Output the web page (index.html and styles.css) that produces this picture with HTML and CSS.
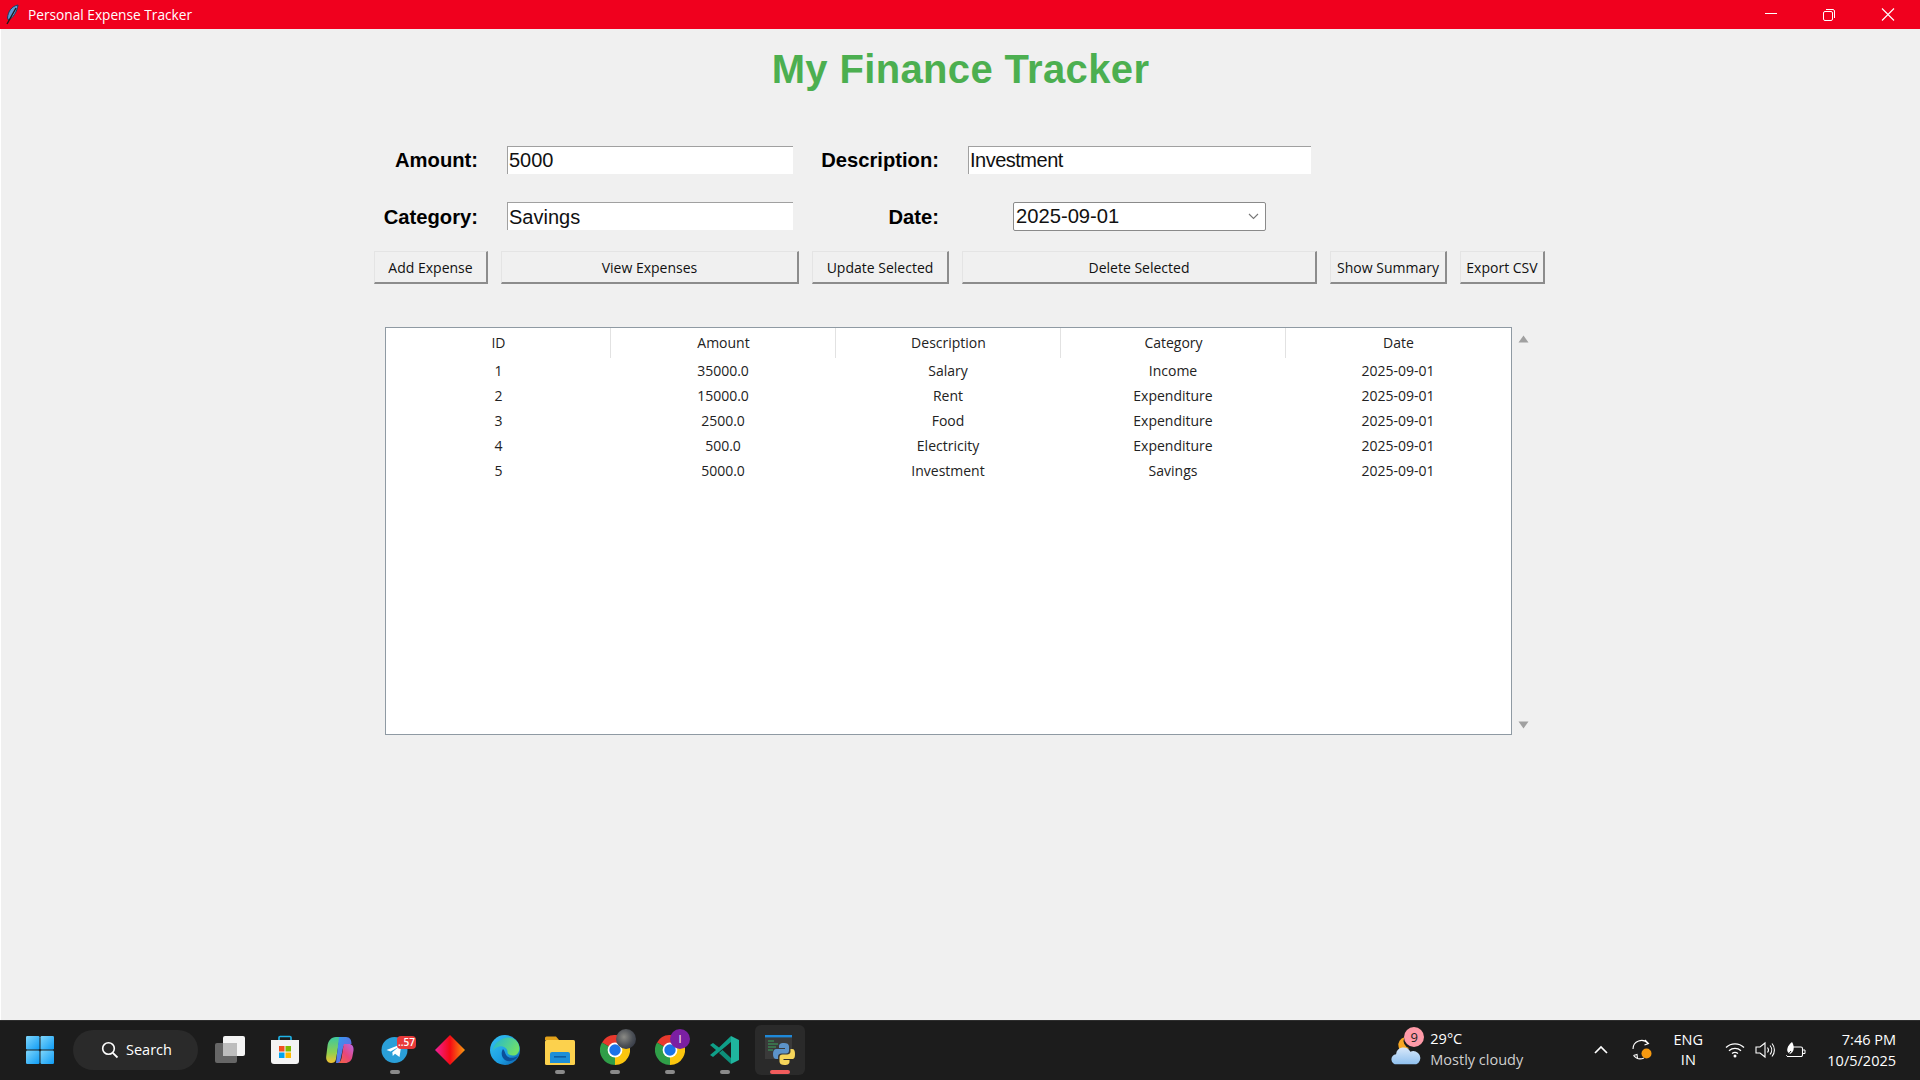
FILE: index.html
```html
<!DOCTYPE html>
<html lang="en">
<head>
<meta charset="utf-8">
<title>Personal Expense Tracker</title>
<link rel="stylesheet" href="styles.css">
</head>
<body>
<svg class="defs" width="0" height="0" aria-hidden="true">
  <symbol id="chrome" viewBox="0 0 30 30">
    <path d="M15 15L2 7.5A15 15 0 0 1 28 7.5Z" fill="#e8392d"/>
    <path d="M15 15L28 7.5A15 15 0 0 1 15 30Z" fill="#fbc60e"/>
    <path d="M15 15L15 30A15 15 0 0 1 2 7.5Z" fill="#2f9e48"/>
    <circle cx="15" cy="15" r="7.4" fill="#fff"/>
    <circle cx="15" cy="15" r="5.7" fill="#1a73e8"/>
  </symbol>
</svg>

<header class="titlebar">
  <svg class="feather" width="16" height="22" viewBox="0 0 16 22">
    <path d="M14 1C8 2 4 7 3.5 14L4.5 16C9 14 13 8 14 1Z" fill="#5b9bd5" stroke="#1d3c5e" stroke-width="1"/>
    <path d="M12 4L3 20" stroke="#1a1a1a" stroke-width="1.4"/>
  </svg>
  <span class="window-title">Personal Expense Tracker</span>
  <div class="window-controls">
    <svg class="ctl" width="58" height="29" viewBox="0 0 58 29"><path d="M22 13.5H34" stroke="#fff" stroke-width="1"/></svg>
    <svg class="ctl" width="58" height="29" viewBox="0 0 58 29"><rect x="22.5" y="11.5" width="9" height="9" rx="1.5" fill="none" stroke="#fff"/><path d="M25 9.5H32A1.8 1.8 0 0 1 33.5 11V18" fill="none" stroke="#fff"/></svg>
    <svg class="ctl" width="58" height="29" viewBox="0 0 58 29"><path d="M23 8.5L35 20.5M35 8.5L23 20.5" stroke="#fff" stroke-width="1.1"/></svg>
  </div>
</header>

<main class="app">
  <h1 class="app-title">My Finance Tracker</h1>

  <section class="form">
    <label class="field-label row1 col1">Amount:</label>
    <div class="entry row1 col2">5000</div>
    <label class="field-label row1 col3">Description:</label>
    <div class="entry row1 col4 tight">Investment</div>

    <label class="field-label row2 col1">Category:</label>
    <div class="entry row2 col2">Savings</div>
    <label class="field-label row2 col3">Date:</label>
    <div class="combo row2 col4">
      <span>2025-09-01</span>
      <svg width="11" height="7" viewBox="0 0 11 7"><path d="M1 1L5.5 5.5L10 1" fill="none" stroke="#777" stroke-width="1.1"/></svg>
    </div>

    <button class="btn row3 col1">Add Expense</button>
    <button class="btn row3 col2">View Expenses</button>
    <button class="btn row3 col3">Update Selected</button>
    <button class="btn row3 col4">Delete Selected</button>
    <button class="btn row3 col5">Show Summary</button>
    <button class="btn row3 col6">Export CSV</button>
  </section>

  <section class="table-wrap">
    <div class="tree">
      <div class="tree-head">
        <div>ID</div><div>Amount</div><div>Description</div><div>Category</div><div>Date</div>
      </div>
      <div class="tree-row"><div>1</div><div>35000.0</div><div>Salary</div><div>Income</div><div>2025-09-01</div></div>
      <div class="tree-row"><div>2</div><div>15000.0</div><div>Rent</div><div>Expenditure</div><div>2025-09-01</div></div>
      <div class="tree-row"><div>3</div><div>2500.0</div><div>Food</div><div>Expenditure</div><div>2025-09-01</div></div>
      <div class="tree-row"><div>4</div><div>500.0</div><div>Electricity</div><div>Expenditure</div><div>2025-09-01</div></div>
      <div class="tree-row"><div>5</div><div>5000.0</div><div>Investment</div><div>Savings</div><div>2025-09-01</div></div>
    </div>
    <div class="scrollbar">
      <svg width="11" height="8" viewBox="0 0 11 8"><path d="M5.5 0.5L10.5 7.5H0.5Z" fill="#a0a0a0"/></svg>
      <svg width="11" height="8" viewBox="0 0 11 8"><path d="M0.5 0.5H10.5L5.5 7.5Z" fill="#a0a0a0"/></svg>
    </div>
  </section>
</main>

<footer class="taskbar">
  <div class="start">
    <svg width="30" height="30" viewBox="0 0 30 30">
      <defs>
        <linearGradient id="win" x1="0" y1="0" x2="1" y2="1"><stop offset="0" stop-color="#7fd6fb"/><stop offset="1" stop-color="#0f9cf5"/></linearGradient>
      </defs>
      <rect x="1" y="1" width="13.5" height="13.5" rx="1.2" fill="url(#win)"/>
      <rect x="15.5" y="1" width="13.5" height="13.5" rx="1.2" fill="url(#win)"/>
      <rect x="1" y="15.5" width="13.5" height="13.5" rx="1.2" fill="url(#win)"/>
      <rect x="15.5" y="15.5" width="13.5" height="13.5" rx="1.2" fill="url(#win)"/>
    </svg>
  </div>
  <div class="search">
    <svg width="18" height="18" viewBox="0 0 18 18"><circle cx="7.5" cy="7.5" r="5.8" fill="none" stroke="#fff" stroke-width="1.6"/><path d="M11.8 11.8L16.5 16.5" stroke="#fff" stroke-width="1.8"/></svg>
    <span>Search</span>
  </div>
  <div class="apps">
    <div class="slot">
      <svg width="30" height="30" viewBox="0 0 30 30"><rect x="0" y="8" width="22" height="20" rx="2" fill="#666"/><rect x="8" y="1" width="22" height="20" rx="2" fill="#f4f4f4"/><rect x="8" y="8" width="14" height="13" fill="#bdbdbd"/></svg>
    </div>
    <div class="slot">
      <svg width="30" height="30" viewBox="0 0 30 30"><path d="M9 5V2.5A1 1 0 0 1 10 1.5H20A1 1 0 0 1 21 2.5V5" fill="none" stroke="#1fb4e8" stroke-width="1.6"/><path d="M1 5H29V26A3 3 0 0 1 26 29H4A3 3 0 0 1 1 26Z" fill="#f4f4f4"/><rect x="9" y="11" width="5.5" height="5.5" fill="#f25022"/><rect x="15.5" y="11" width="5.5" height="5.5" fill="#7fba00"/><rect x="9" y="17.5" width="5.5" height="5.5" fill="#00a4ef"/><rect x="15.5" y="17.5" width="5.5" height="5.5" fill="#ffb900"/></svg>
    </div>
    <div class="slot">
      <svg width="30" height="30" viewBox="0 0 30 30">
        <defs>
          <linearGradient id="cop1" x1="0" y1="0" x2="1" y2="1"><stop offset="0" stop-color="#2f9ff0"/><stop offset="1" stop-color="#7a55e0"/></linearGradient>
          <linearGradient id="cop2" x1="0" y1="1" x2="1" y2="0"><stop offset="0" stop-color="#f26a3a"/><stop offset="0.5" stop-color="#e8467a"/><stop offset="1" stop-color="#b868e8"/></linearGradient>
          <linearGradient id="cop3" x1="0" y1="0" x2="0" y2="1"><stop offset="0" stop-color="#3cc8a0"/><stop offset="0.6" stop-color="#8ed050"/><stop offset="1" stop-color="#f5c030"/></linearGradient>
        </defs>
        <path d="M11 2H19C16 2 14.5 4 14 7L11 24C10.500 27 8.500 28 6 28C2.500 28 0.800 25 1.200 21.500L2.500 11C3 6 6 2 11 2Z" fill="url(#cop3)"/>
        <path d="M14 2H21C25 2 26.500 5 26.500 9L23 9C20 9 18.500 10.500 18 13L15 27C14.700 28 13 28 11 28Z" fill="url(#cop1)"/>
        <path d="M19 9H24C27 9 29 11.500 28.500 15.500L27.500 21C27 25.500 24 28 20 28H12C15 28 16 25.500 16.500 23L18 14C18.400 11 18.500 10 19 9Z" fill="url(#cop2)"/>
      </svg>
    </div>
    <div class="slot on">
      <svg width="30" height="30" viewBox="0 0 30 30"><circle cx="14.500" cy="15" r="13" fill="#2a9fd8"/><path d="M6.500 15L21.500 9L19.500 22L15 18.800L12.800 21L12.300 17.300L18.500 12L10.500 16.600Z" fill="#fff"/></svg>
      <span class="badge-red">..57</span>
    </div>
    <div class="slot">
      <svg width="30" height="30" viewBox="0 0 30 30">
        <defs><linearGradient id="dia" x1="0" y1="0" x2="1" y2="0"><stop offset="0" stop-color="#f0209a"/><stop offset="0.5" stop-color="#f50a14"/><stop offset="1" stop-color="#f79a10"/></linearGradient></defs>
        <path d="M15 0L30 15L15 30L0 15Z" fill="url(#dia)"/>
      </svg>
    </div>
    <div class="slot">
      <svg width="30" height="30" viewBox="0 0 30 30">
        <defs>
          <linearGradient id="edge1" x1="0" y1="0" x2="1" y2="1"><stop offset="0" stop-color="#35c1f1"/><stop offset="0.6" stop-color="#1b9de2"/><stop offset="1" stop-color="#0c59a4"/></linearGradient>
          <linearGradient id="edge2" x1="0" y1="0" x2="1" y2="0.5"><stop offset="0" stop-color="#1fb5d8"/><stop offset="1" stop-color="#6fe06a"/></linearGradient>
        </defs>
        <circle cx="15" cy="15" r="15" fill="url(#edge1)"/>
        <path d="M9 6C14 1 24 1 28 8C30.500 13 29.500 18 26 20C22 21.500 18 20 17.500 17.500C18 14 14 10.500 9 11.500C6 12.200 4 14 3 16C3 12 5 8 9 6Z" fill="url(#edge2)"/>
        <path d="M13 14C11 17 11 22 15 25C19 27.500 25 26 28 21C25 23 19 24 16.500 20.500C15 18.500 15 16 13 14Z" fill="#0c4f99"/>
      </svg>
    </div>
    <div class="slot on">
      <svg width="30" height="30" viewBox="0 0 30 30"><path d="M0 3A1.500 1.500 0 0 1 1.500 1.500H11L14 5H0Z" fill="#e3a21a"/><rect x="0" y="5" width="30" height="25" rx="1.500" fill="#fcd14d"/><path d="M5 19A2 2 0 0 1 7 17H23A2 2 0 0 1 25 19V28H5Z" fill="#1f8fd8"/><rect x="9" y="21" width="12" height="1.600" fill="#0d5ea3"/></svg>
    </div>
    <div class="slot on">
      <svg class="slot-icon" width="30" height="30"><use href="#chrome"/></svg>
      <span class="avatar"></span>
    </div>
    <div class="slot on">
      <svg class="slot-icon" width="30" height="30"><use href="#chrome"/></svg>
      <span class="profile">I</span>
    </div>
    <div class="slot on">
      <svg width="30" height="30" viewBox="0 0 30 30"><path d="M21 1L29 5V25L21 29Z" fill="#1fb59e"/><path d="M21 1V7L9 17L3 22L0 20L6 15L0 10L3 8L9 12.500Z" fill="#0f9f88"/><path d="M21 23V29L9 18L12.500 15Z" fill="#0d8f7a"/></svg>
    </div>
    <div class="slot active">
      <svg width="30" height="30" viewBox="0 0 30 30">
        <rect x="0" y="0" width="27" height="24" fill="#3a3a3a"/>
        <rect x="0" y="0" width="27" height="2.400" fill="#1e88d8"/>
        <path d="M3 6H9M3 9H13M3 12H11M3 15H8" stroke="#3ba55d" stroke-width="1"/>
        <path d="M19 8C15 8 14 9.500 14 11.500V13H20V14H11.500C9 14 8 16 8 19C8 22 9 24 11.500 24H13V21.500C13 19.500 14.500 18.500 16.500 18.500H21C23 18.500 24 17.500 24 15.500V11.500C24 9 22 8 19 8Z" fill="#5c93c9"/>
        <path d="M19.500 30C23.500 30 24.500 28.500 24.500 26.500V25H18.500V24H27C29.500 24 30 22 30 19C30 16 29.500 14 27 14H25.500V16.500C25.500 18.500 24 19.500 22 19.500H17.500C15.500 19.500 14.500 20.500 14.500 22.500V26.500C14.500 29 16.500 30 19.500 30Z" fill="#f5d55a"/>
      </svg>
    </div>
  </div>

  <div class="tray">
    <div class="weather">
      <svg width="32" height="32" viewBox="0 0 38 38">
        <defs><linearGradient id="cloud" x1="0" y1="0" x2="0" y2="1"><stop offset="0" stop-color="#d8e8fa"/><stop offset="1" stop-color="#8fc0ee"/></linearGradient></defs>
        <path d="M9 15A9 9 0 0 1 16 4A9 9 0 0 0 22 17L10 19Z" fill="#f6a623"/>
        <path d="M7 36A6 6 0 0 1 6 24A9 9 0 0 1 23 21A7.500 7.500 0 0 1 30 36Z" fill="url(#cloud)"/>
      </svg>
      <span class="badge-pink">9</span>
      <div class="weather-text">
        <span class="temp">29°C</span>
        <span class="cond">Mostly cloudy</span>
      </div>
    </div>
    <svg class="chev" width="14" height="9" viewBox="0 0 14 9"><path d="M1 8L7 2L13 8" fill="none" stroke="#fff" stroke-width="1.700"/></svg>
    <div class="sync">
      <svg width="24" height="24" viewBox="0 0 24 24"><path d="M3 11A8.500 8.500 0 0 1 18 5.500M15 2L18.500 5.500L14.500 7M3.500 17.500L7 16.500L7.500 20.500M3.500 17.500A9 9 0 0 0 14 20" fill="none" stroke="#fff" stroke-width="1.100"/><circle cx="16.500" cy="15.500" r="5" fill="#f79a10"/></svg>
    </div>
    <div class="lang"><span>ENG</span><span>IN</span></div>
    <div class="sys">
      <svg width="20" height="16" viewBox="0 0 20 16"><path d="M1 5.500A13 13 0 0 1 19 5.500M4 8.700A9 9 0 0 1 16 8.700M7 11.500A5 5 0 0 1 13 11.500" fill="none" stroke="#fff" stroke-width="1.300"/><circle cx="10" cy="14" r="1.500" fill="#fff"/></svg>
      <svg width="20" height="18" viewBox="0 0 20 18"><path d="M1 6H5L10 2V16L5 12H1Z" fill="none" stroke="#fff" stroke-width="1.100"/><path d="M12.500 6.500A4 4 0 0 1 12.500 11.500M15 4.500A7 7 0 0 1 15 13.500M17 2.500A10 10 0 0 1 17 15.500" fill="none" stroke="#fff" stroke-width="1.100"/></svg>
      <svg width="21" height="18" viewBox="0 0 21 18"><path d="M3 6H16A1.500 1.500 0 0 1 17.500 7.500V14A1.500 1.500 0 0 1 16 15.500H3A1.500 1.500 0 0 1 1.500 14" fill="none" stroke="#fff" stroke-width="1.100"/><path d="M18 9H20V12.500H18" fill="none" stroke="#fff"/><path d="M5 13C1 11 1 6 7 1C10 6 9 11 5 13Z" fill="#fff"/><path d="M1 16L6 10" stroke="#1c1c1c" stroke-width="1"/></svg>
    </div>
    <div class="clock"><span>7:46 PM</span><span>10/5/2025</span></div>
  </div>
</footer>
</body>
</html>
```

FILE: styles.css
```css
* { box-sizing: border-box; }
html, body { margin: 0; height: 100%; }
body {
  width: 1920px;
  height: 1080px;
  overflow: hidden;
  display: flex;
  flex-direction: column;
  background: #f0f0f0;
  font-family: "Open Sans", "Noto Sans", sans-serif;
}
.defs { position: absolute; }

/* Window title bar */
.titlebar {
  height: 29px;
  flex: none;
  background: #f0001e;
  display: flex;
  align-items: center;
  padding-left: 4px;
  color: #fff;
}
.feather { margin-right: 8px; }
.window-title { font-size: 13.7px; }
.window-controls { margin-left: auto; display: flex; margin-right: 3px; }
.ctl { display: block; }

/* App body */
.app {
  flex: 1;
  min-height: 0;
  border-left: 1px solid #fff;
  padding-left: 373px;
  display: flex;
  flex-direction: column;
}
.app-title {
  margin: 0 0 0 -373px;
  text-align: center;
  font: bold 40px/46px "Liberation Sans", Arial, sans-serif;
  letter-spacing: 0.35px;
  color: #4caf50;
  padding-top: 17px;
  height: 117px;
}

.form {
  display: grid;
  grid-template-columns: 114px 298px 137px 355px 117px 85px;
  grid-template-rows: 28px 57px 53px;
  column-gap: 13px;
  align-items: center;
}
.row1 { grid-row: 1; }
.row2 { grid-row: 2; margin-top: 28px; }
.row3 { grid-row: 3; margin-top: 20px; }
.col1 { grid-column: 1; }
.col2 { grid-column: 2; }
.col3 { grid-column: 3; }
.col4 { grid-column: 4; }
.col5 { grid-column: 5; }
.col6 { grid-column: 6; }

.field-label {
  font: bold 20.2px/25px "Liberation Sans", Arial, sans-serif;
  color: #000;
  text-align: right;
  padding-right: 10px;
}
.field-label.row2 { padding-top: 1px; }
.entry {
  margin-left: 6px;
  margin-right: 6px;
  height: 28px;
  align-self: start;
  background: #fff;
  border-top: 1px solid #a0a0a0;
  border-left: 1px solid #a0a0a0;
  padding-left: 1px;
  font: 20px/26px "Liberation Sans", Arial, sans-serif;
  color: #111;
}
.entry.row2 { line-height: 28px; }
.tight { letter-spacing: -0.5px; }
.combo {
  justify-self: center;
  width: 253px;
  height: 29px;
  background: #fff;
  border: 1px solid #8a8a8a;
  border-radius: 2px;
  padding: 0 6px 0 2px;
  display: flex;
  align-items: center;
  justify-content: space-between;
  font: 20.2px/27px "Liberation Sans", Arial, sans-serif;
  color: #111;
}
.btn {
  height: 33px;
  padding: 0;
  background: #f0f0f0;
  border: 1px solid;
  border-color: #e4e4e4 #8c8c8c #8c8c8c #e4e4e4;
  border-bottom-width: 2px;
  border-right-width: 2px;
  font-family: "Open Sans", "Noto Sans", sans-serif;
  font-size: 14px;
  color: #111;
  width: 100%;
}

/* Table */
.table-wrap {
  margin-top: 43px;
  margin-left: 11px;
  display: flex;
}
.tree {
  width: 1127px;
  height: 408px;
  background: #fff;
  border: 1px solid #8f9aa3;
  font-size: 14px;
  color: #222;
}
.tree-head, .tree-row {
  display: grid;
  grid-template-columns: 224px repeat(4, 225px);
  text-align: center;
}
.tree-head > div, .tree-row > div { padding-left: 1px; }
.tree-head { height: 30px; line-height: 30px; }
.tree-head > div + div { border-left: 1px solid #e2e2e2; }
.tree-row { height: 25px; line-height: 25px; }
.scrollbar {
  width: 22px;
  display: flex;
  flex-direction: column;
  justify-content: space-between;
  align-items: center;
  padding: 8px 0 6px;
}

/* Taskbar */
.taskbar {
  height: 60px;
  flex: none;
  background: #1c1c1c;
  border-top: 1px solid #2e2e2e;
  padding-bottom: 2px;
  display: flex;
  align-items: center;
  color: #fff;
  position: relative;
}
.start { width: 73px; display: flex; justify-content: center; padding-left: 7px; }
.start svg { display: block; }
.search {
  width: 125px;
  height: 40px;
  border-radius: 20px;
  background: #2a2a2a;
  display: flex;
  align-items: center;
  justify-content: center;
  gap: 7px;
  padding-left: 2px;
  font-size: 14.5px;
  margin-right: 4px;
}
.apps { display: flex; }
.slot {
  width: 55px;
  height: 50px;
  display: flex;
  align-items: center;
  justify-content: center;
  position: relative;
}
.slot.on::after {
  content: "";
  position: absolute;
  left: 23px;
  bottom: 1px;
  width: 10px;
  height: 4px;
  border-radius: 2px;
  background: #8a8a8a;
}
.slot.active { background: #2a2a2a; border-radius: 6px; width: 50px; margin: 0 2.5px; }
.slot.active::after {
  content: "";
  position: absolute;
  left: 15px;
  bottom: 1px;
  width: 20px;
  height: 4px;
  border-radius: 2px;
  background: #f25c5c;
}
.badge-red {
  position: absolute;
  top: 11px;
  left: 30px;
  width: 19px;
  height: 13px;
  border-radius: 4px;
  background: #e83a3a;
  color: #fff;
  font-size: 10px;
  line-height: 13px;
  text-align: center;
  font-weight: 600;
}
.avatar {
  position: absolute;
  top: 4px;
  left: 29px;
  width: 20px;
  height: 20px;
  border-radius: 50%;
  background: radial-gradient(circle at 40% 40%, #8b8b86 0, #4d5157 50%, #23293a 100%);
}
.profile {
  position: absolute;
  top: 4px;
  left: 28px;
  width: 20px;
  height: 20px;
  border-radius: 50%;
  background: #7b1fa2;
  color: #fff;
  font-size: 11px;
  line-height: 20px;
  text-align: center;
}

.tray {
  margin-left: auto;
  display: flex;
  align-items: center;
  padding-right: 24px;
}
.weather { display: flex; align-items: center; position: relative; }
.weather-text { display: flex; flex-direction: column; margin-left: 7px; width: 164px; }
.temp { font-size: 14.5px; line-height: 20px; }
.cond { font-size: 14.5px; line-height: 21px; color: #cfcfcf; }
.badge-pink {
  position: absolute;
  left: 13px;
  top: -2px;
  width: 20px;
  height: 20px;
  border-radius: 50%;
  background: #ff9aa8;
  color: #222;
  font-size: 13px;
  line-height: 20px;
  text-align: center;
}
.chev { margin-right: 22px; }
.sync { margin-right: 14px; display: flex; }
.lang { display: flex; flex-direction: column; align-items: center; font-size: 14.5px; line-height: 20px; width: 40px; margin-right: 17px; }
.sys { display: flex; align-items: center; gap: 10px; margin-right: 21px; }
.clock { display: flex; flex-direction: column; align-items: flex-end; font-size: 14.5px; line-height: 21px; }
```
